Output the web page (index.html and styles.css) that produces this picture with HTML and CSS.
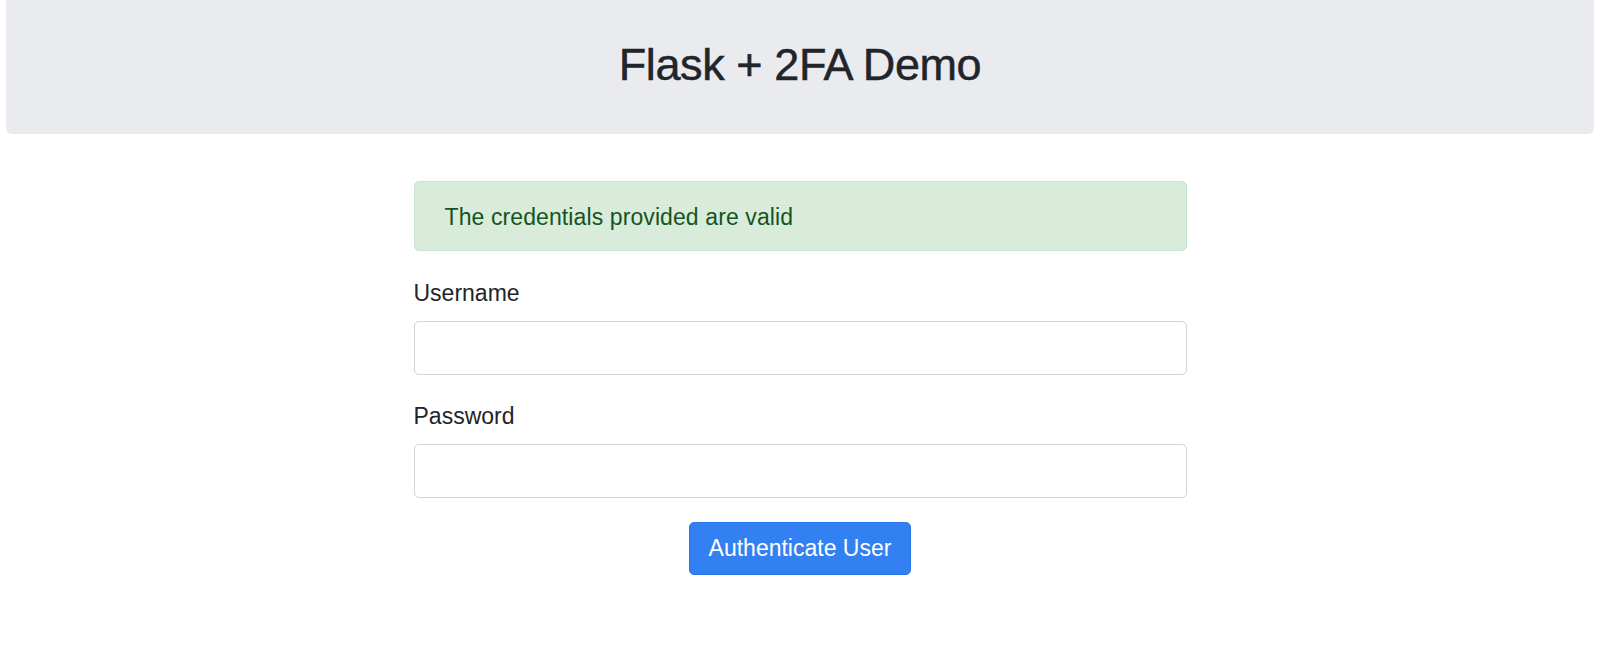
FILE: index.html
```html
<!DOCTYPE html>
<html lang="en">
<head>
<meta charset="utf-8">
<title>Flask + 2FA Demo</title>
<link rel="stylesheet" href="styles.css">
</head>
<body>
  <header class="jumbotron">
    <h1 class="title">Flask + 2FA Demo</h1>
  </header>
  <main class="container">
    <div class="alert">The credentials provided are valid</div>
    <form class="form">
      <label class="label label-first" for="username">Username</label>
      <input class="input" type="text" id="username" name="username">
      <label class="label" for="password">Password</label>
      <input class="input" type="password" id="password" name="password">
      <div class="actions">
        <button class="btn" type="button">Authenticate User</button>
      </div>
    </form>
  </main>
</body>
</html>
```

FILE: styles.css
```css
* {
  box-sizing: border-box;
}

html, body {
  margin: 0;
  padding: 0;
  background: #ffffff;
}

body {
  font-family: "Liberation Sans", Arial, sans-serif;
  color: #212529;
  font-size: 23px;
  line-height: 28px;
}

.jumbotron {
  margin: 0 6px;
  height: 134px;
  padding-top: 37px;
  background: #eaebef;
  border-radius: 0 0 6px 6px;
  text-align: center;
}

.title {
  margin: 0;
  font-size: 45px;
  line-height: 55px;
  font-weight: 400;
  letter-spacing: -0.4px;
  -webkit-text-stroke: 0.5px #212529;
  color: #212529;
}

.container {
  width: 773px;
  margin: 47px auto 0;
}

.alert {
  height: 70px;
  padding: 21px 30px 19px;
  background: #d9ecdc;
  border: 1px solid #c6e5cc;
  border-radius: 5px;
  color: #155520;
  letter-spacing: 0.1px;
}

.form {
  display: flex;
  flex-direction: column;
}

.label {
  display: block;
  margin-top: 27px;
  margin-bottom: 14px;
  line-height: 28px;
}

.label-first {
  margin-top: 28px;
  margin-bottom: 14px;
}

.input {
  display: block;
  width: 100%;
  height: 54px;
  margin: 0;
  padding: 0 18px;
  border: 1.5px solid #d0d3d8;
  border-radius: 5px;
  background: #ffffff;
  font: inherit;
}

.actions {
  display: flex;
  justify-content: center;
  margin-top: 24px;
}

.btn {
  height: 53px;
  padding: 0 19px;
  border: 1px solid #2b77ea;
  border-radius: 5px;
  background: #3380f3;
  color: #ffffff;
  font-family: "Liberation Sans", Arial, sans-serif;
  font-size: 23px;
  line-height: 27px;
  cursor: pointer;
}
```
